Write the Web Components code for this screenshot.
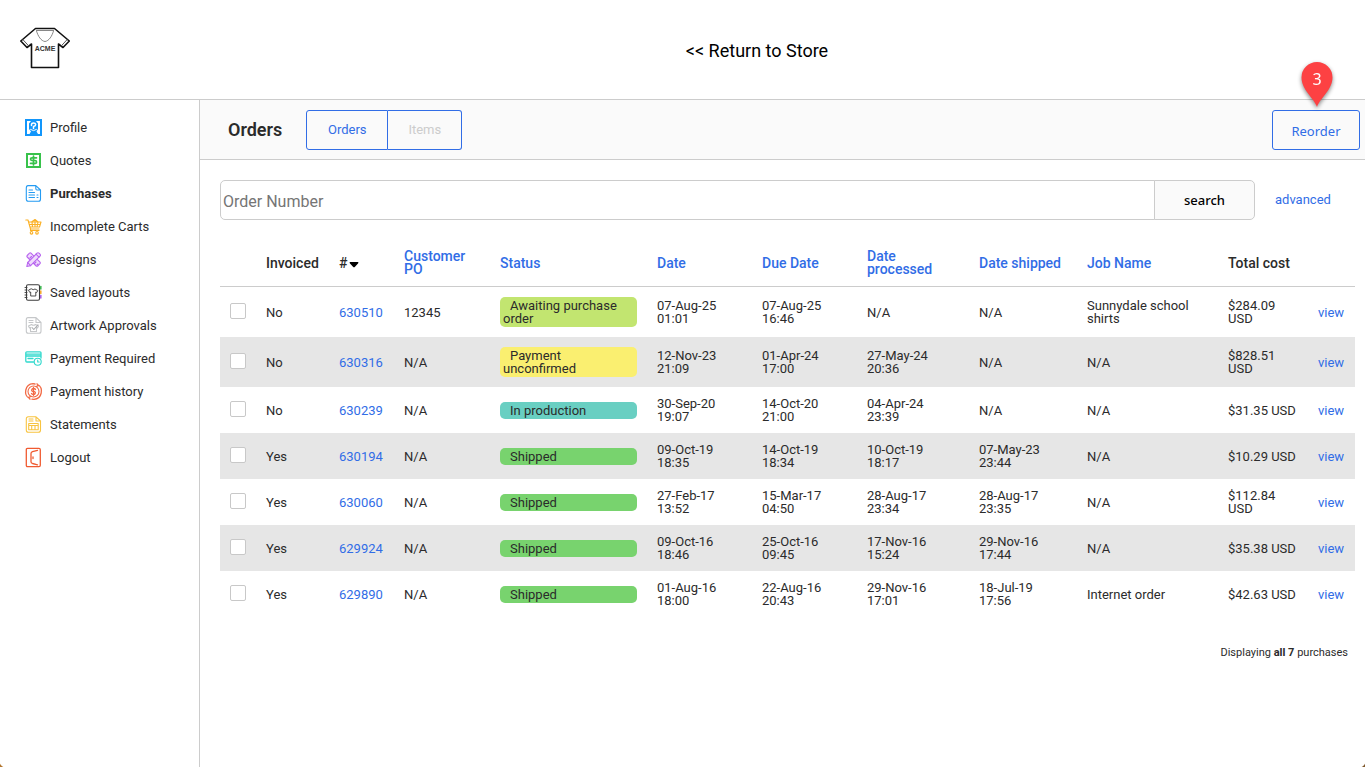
<!DOCTYPE html>
<html lang="en">
<head>
<meta charset="utf-8">
<meta name="viewport" content="width=device-width, initial-scale=1">
<title>Orders</title>
<style>
:root{--link:#316de6;--ink:#2b2b2b;--line:#ccc;--panel:#fafafa;--ui:"Noto Sans",sans-serif}
html,body{margin:0;min-height:100%}
body{font:13px/17px Roboto,sans-serif;color:var(--ink);background:#fff}
</style>
</head>
<body>
<store-account></store-account>

<script>
const define = (name, html, setup) => {
  const tpl = document.createElement('template');
  tpl.innerHTML = html;
  customElements.define(name, class extends HTMLElement {
    constructor() {
      super();
      this.attachShadow({ mode: 'open' }).append(tpl.content.cloneNode(true));
    }
    connectedCallback() { if (setup) setup(this, this.shadowRoot); }
  });
};

/* Site header: logo and link back to the shop */
define('store-header', `
<style>
:host{display:flex;align-items:center;height:99px;border-bottom:1px solid var(--line)}
.logo{flex:0 0 129px;padding:0 0 4px 20px;display:flex}
.back{flex:1;padding-top:2px;text-align:center;font-size:18px;line-height:24px}
a{color:#000;text-decoration:none}
svg{display:block}
</style>
<a class="logo" href="#home" aria-label="Acme">
<svg width="50" height="44" viewBox="0 0 50 44" fill="none" stroke="#111" stroke-width="1.6" stroke-linejoin="round">
<path d="M15.500 2.500H34.500L49.300 15 43 21.500 38.500 18V41.500H11.500V18L7 21.500.8 15Z"/>
<path d="M2.800 13.500l6 6.500M47.200 13.500l-6 6.500" stroke-width="1" stroke="#555"/>
<path d="M16 4.500H34" stroke-width="1" stroke="#888"/>
<path d="M16.500 5C18 10 21 15 25 15.500 29 15 32 10 33.500 5" stroke-width="1" stroke="#888"/>
<text x="25" y="25" text-anchor="middle" font-family="Liberation Sans,sans-serif" font-weight="700" font-size="7" fill="#333" stroke="none">ACME</text>
</svg></a>
<div class="back"><a href="#store">&lt;&lt; Return to Store</a></div>`);

/* One sidebar entry; the icon is slotted in */
define('nav-item', `
<style>
:host{display:block}
a{display:flex;align-items:center;gap:8px;height:33px;color:inherit;text-decoration:none}
:host([current]) a{font-weight:700}
::slotted(svg){display:block;width:17px;height:17px;overflow:visible}
</style>
<a href="#"><slot name="icon"></slot><span><slot></slot></span></a>`,
(el, root) => { if (el.hasAttribute('current')) root.querySelector('a').setAttribute('aria-current', 'page'); });

define('side-nav', `
<style>
:host{display:block;box-sizing:border-box;flex:0 0 200px;padding:11px 0 0 25px;border-right:1px solid var(--line)}
svg{fill:none;stroke-width:1.1;stroke-linejoin:round;stroke-linecap:round}
</style>
<nav>
<nav-item><svg slot="icon" viewBox="0 0 17 17" stroke="#1296fb"><path d="M0 0H17V17H0ZM2 2V15H4.500L6 12.500 4 10V4.500L6 2ZM11 2L13 4.500V10L11.500 12.500 13 15H15V2Z" fill="#1296fb" fill-rule="evenodd" stroke="none"/><path d="M6.500 6.500V5.200Q6.500 4 8.500 4T10.700 5.500Q10.700 7 8.500 7.500V9.500" stroke="#fff" stroke-width="1.500"/><path d="M5.500 10.500Q8.500 13 11.500 10.500" stroke="#fff" stroke-width="1"/></svg>Profile</nav-item>
<nav-item><svg slot="icon" viewBox="0 0 17 17" stroke="#38c24b"><path d="M2 2H15V15H2Z" stroke-width="2" stroke-linejoin="miter"/><path d="M11.500 5.800H7Q5.500 5.800 5.500 7T7 8.500H10Q11.500 8.500 11.500 10T10 11.300H5.500M8.500 4V13" stroke-width="1.700"/></svg>Quotes</nav-item>
<nav-item current><svg slot="icon" viewBox="0 0 17 17" stroke="#249bf2"><path d="M3 .6H10.800L15.500 5V14Q15.500 16.300 13.500 16.300H3.500Q1.300 16.300 1.300 14V3Q1.300.6 3 .6ZM10.800.8V3.500Q10.800 5 12 5H15.300M4 5H7.500M4 7.500H9.500M4 10H9.500M12 10H13M4 12.500H9.500M12 12.500H13"/></svg>Purchases</nav-item>
<nav-item><svg slot="icon" viewBox="0 0 17 17" stroke="#fbb024"><path d="M.8 2H3L5.500 11H14M3.600 4H16L14.500 9H5M4.500 6.500H15M7 4L7.500 9M10 1.500V9M13 4L12 9M6.500 4L10 1.500 13 4M5.500 11V12.500H14"/><circle cx="6.500" cy="14.800" r="1.300"/><circle cx="12" cy="14.800" r="1.300"/></svg>Incomplete Carts</nav-item>
<nav-item><svg slot="icon" viewBox="0 0 17 17" stroke="#b866ef"><g fill="#f0dcfc"><path d="M2.200 4.500L4.500 2.200Q5.300 1.500 6 2.200L15 11.200Q15.600 12 15 12.700L12.700 15Q12 15.600 11.200 15L2.200 6Q1.500 5.300 2.200 4.500Z"/><path d="M1.800 15.500L2.700 11.500 12 2.200Q13 1.300 14 2.200L15 3.200Q16 4.300 15 5.200L5.600 14.600Z"/></g><path d="M2.700 11.500L5.600 14.600M11 3.200L14 6.200M5 7L6.500 5.500M9.500 12.500L11 11M12 14L13 13"/></svg>Designs</nav-item>
<nav-item><svg slot="icon" viewBox="0 0 17 17" stroke="#3c3c3c"><rect x="1.500" y=".8" width="13" height="15.500" rx="1.500"/><path d="M0 3.500H2M0 6H2M0 8.500H2M0 11H2M0 13.500H2M6.500 5Q8.300 6.500 10 5L12.800 6.500 11.700 8.500 10.800 8V12H5.700V8L4.800 8.500 3.700 6.500Z" stroke-width=".9"/><path d="M15.800 2.500V5" stroke="#36b34a" stroke-width="1.500"/><path d="M15.800 7V9.500" stroke="#f5a623" stroke-width="1.500"/><path d="M15.800 11.500V14" stroke="#a55be5" stroke-width="1.500"/></svg>Saved layouts</nav-item>
<nav-item><svg slot="icon" viewBox="0 0 17 17" stroke="#c5c7c9"><path d="M3 .6H11L16 5.500V14.300Q16 16.300 14 16.300H3.300Q1.300 16.300 1.300 14.300V2.600Q1.300.6 3 .6ZM11 .8V5.500H15.800M4 3.500H8M4 5.500H8M6.500 7.500Q8.500 9 10.500 7.500L13.500 9 12.500 11 11.500 10.500V14.500H5.500V10.500L4.500 11 3.500 9Z"/><path d="M7 10.500L8.800 12.500 13 7.800" stroke="#a9acae"/></svg>Artwork Approvals</nav-item>
<nav-item><svg slot="icon" viewBox="0 0 17 17" stroke="#30d9cd"><path d="M8.500 12H1.800Q.8 12 .8 11V2.800Q.8 1.800 1.800 1.800H15Q16 1.800 16 2.800V8M1 4.200H16M1 6H16M3 8.500H8" stroke-width="1.300"/><circle cx="12.700" cy="11.800" r="3.500"/><path d="M12.700 10V12H14.200"/></svg>Payment Required</nav-item>
<nav-item><svg slot="icon" viewBox="0 0 17 17" stroke="#f26a45"><circle cx="8.500" cy="8.500" r="5.500"/><path d="M10 1L8 .6Q2 1 .8 7T4.500 15.500M7 16.200L9 16.400Q15 16 16.200 10T12.500 1.500M12 .8L13 2.800 11 3.500M5 16.200L4 14.200 6 13.500M10.500 6.500Q10 5.500 8.500 5.500T6.700 7 8.500 8.500 10.300 10 8.500 11.500Q7 11.500 6.500 10.500M8.500 4.500V12.500" stroke-width="1.300"/></svg>Payment history</nav-item>
<nav-item><svg slot="icon" viewBox="0 0 17 17" stroke="#f8c440"><path d="M3.300.8H11L15.500 5V14Q15.500 16.300 13.300 16.300H3.500Q1.300 16.300 1.300 14V3Q1.300.8 3.300.8ZM11 1V5H15.300M4 3H8M4 5H8M3.700 7.500H13.200V13.800H3.700ZM3.700 9.500H13.200M6.700 9.500V13.500M10 9.500V13.500"/></svg>Statements</nav-item>
<nav-item><svg slot="icon" viewBox="0 0 17 17" stroke="#f05a30"><path d="M2.500-.6H14Q15.300-.6 15.300.7V16.300Q15.300 17.600 14 17.600H2.500Q1.300 17.600 1.300 16.300V.7Q1.300-.6 2.500-.6ZM12.500 1.300L7.500 2.700Q6 3.200 6 4.500V12.700Q6 14 7.500 14.500L12.500 15.900M8 8V9.500" stroke-width="1.300"/></svg>Logout</nav-item>
</nav>`);

/* Numbered callout that hangs over the button below it */
define('step-pin', `
<style>
:host{position:absolute;left:50%;bottom:100%;width:40px;height:52px;margin-left:-20px;pointer-events:none}
svg{display:block;overflow:visible;filter:drop-shadow(0 2px 2px #0007)}
</style>
<svg width="40" height="52" viewBox="0 0 40 52"><path d="M21 49C18 40 5.500 32 5.500 19.500A15.500 15.500 0 0 1 36.500 19.500C36.500 32 24 40 21 49Z" fill="#fd4143"/><text x="21" y="27" text-anchor="middle" font-family="Noto Sans,sans-serif" font-size="16" fill="#fff"></text></svg>`,
(el, root) => { root.querySelector('text').textContent = el.getAttribute('number'); });

define('orders-toolbar', `
<style>
:host{display:flex;align-items:center;height:59px;padding:0 5px 0 28px;background:var(--panel);border-bottom:1px solid var(--line)}
h1{margin:0 24px 0 0;font-size:18px;line-height:24px;font-weight:600}
button{box-sizing:border-box;height:40px;padding:0;border:1px solid var(--link);background:none;color:var(--link);font:inherit}
.tabs{display:flex}
.tabs button:first-child{width:82px;border-radius:3px 0 0 3px}
.tabs button:last-child{width:74px;border-radius:0 3px 3px 0;border-left:0}
.tabs button:disabled{color:#ccc}
.action{position:relative;margin-left:auto}
.action button{width:88px;padding-top:3px;font-family:var(--ui);border-radius:3px}
</style>
<h1>Orders</h1>
<div class="tabs"><button type="button">Orders</button><button type="button" disabled>Items</button></div>
<div class="action"><button type="button">Reorder</button><step-pin number="3"></step-pin></div>`);

define('order-search', `
<style>
:host{display:block}
form{display:flex;align-items:center}
input,button{box-sizing:border-box;height:40px;margin:0;border:1px solid var(--line)}
input{flex:1;min-width:0;padding:4px 2px 2px;border-radius:5px 0 0 5px;font-family:inherit;font-size:16px;background:#fff}
input::placeholder{color:#757575}
button{width:101px;margin-left:-1px;border-radius:0 5px 5px 0;background:var(--panel);color:#000;font-family:var(--ui);font-size:13px;font-weight:500}
a{box-sizing:border-box;width:100px;padding:0 0 2px 20px;color:var(--link);text-decoration:none}
</style>
<form role="search"><input type="text" aria-label="Order Number" placeholder="Order Number"><button type="button">search</button><a href="#advanced">advanced</a></form>`);

define('status-pill', `
<style>
:host{display:block;padding:2px 3px;border-radius:5px;text-indent:7px;background:#78d36e}
:host([tone=lime]){background:#c2e570}
:host([tone=yellow]){background:#faef70}
:host([tone=teal]){background:#69cfc2}
</style><slot></slot>`);

const ORDERS = [
  ['No', '630510', '12345', 'Awaiting purchase order', '07-Aug-25 01:01', '07-Aug-25 16:46', 'N/A', 'N/A', 'Sunnydale school shirts', '$284.09 USD'],
  ['No', '630316', 'N/A', 'Payment unconfirmed', '12-Nov-23 21:09', '01-Apr-24 17:00', '27-May-24 20:36', 'N/A', 'N/A', '$828.51 USD'],
  ['No', '630239', 'N/A', 'In production', '30-Sep-20 19:07', '14-Oct-20 21:00', '04-Apr-24 23:39', 'N/A', 'N/A', '$31.35 USD'],
  ['Yes', '630194', 'N/A', 'Shipped', '09-Oct-19 18:35', '14-Oct-19 18:34', '10-Oct-19 18:17', '07-May-23 23:44', 'N/A', '$10.29 USD'],
  ['Yes', '630060', 'N/A', 'Shipped', '27-Feb-17 13:52', '15-Mar-17 04:50', '28-Aug-17 23:34', '28-Aug-17 23:35', 'N/A', '$112.84 USD'],
  ['Yes', '629924', 'N/A', 'Shipped', '09-Oct-16 18:46', '25-Oct-16 09:45', '17-Nov-16 15:24', '29-Nov-16 17:44', 'N/A', '$35.38 USD'],
  ['Yes', '629890', 'N/A', 'Shipped', '01-Aug-16 18:00', '22-Aug-16 20:43', '29-Nov-16 17:01', '18-Jul-19 17:56', 'Internet order', '$42.63 USD'],
];
const TONES = { 'Awaiting purchase order': 'lime', 'Payment unconfirmed': 'yellow', 'In production': 'teal', 'Shipped': 'green' };
const COLUMNS = [36, 73, 65, 96, 157, 105, 105, 112, 108, 141, 90, 47];

define('orders-table', `
<style>
:host{display:block;line-height:13px}
table{width:100%;table-layout:fixed;border-collapse:separate;border-spacing:0}
th,td{padding:10px;text-align:left;vertical-align:middle}
th:nth-child(8),td:nth-child(8){padding-right:20px}
th:nth-child(11),td:nth-child(11){padding-right:8px}
th{border-bottom:1px solid var(--line);font-size:14px;font-weight:500;height:26px}
th:nth-child(9){white-space:nowrap}
td{height:26px}
tr:nth-child(even) td{background:#e6e6e6}
a{color:var(--link);text-decoration:none}
th svg{margin-left:2px}
input{appearance:none;display:block;box-sizing:border-box;width:16px;height:16px;margin:0 0 2px;border:1px solid #c8c8c8;border-radius:2px;background:#fff}
</style>
<table>
<colgroup></colgroup>
<thead><tr><th aria-label="Select"></th><th>Invoiced</th><th>#<svg width="10" height="7" viewBox="0 0 10 7"><path d="M1 1H9Q10 1.500 9 2.500L6 5.700Q5 6.700 4 5.700L1 2.500Q0 1.500 1 1Z"/></svg></th><th><a href="#">Customer PO</a></th><th><a href="#">Status</a></th><th><a href="#">Date</a></th><th><a href="#">Due Date</a></th><th><a href="#">Date processed</a></th><th><a href="#">Date shipped</a></th><th><a href="#">Job Name</a></th><th>Total cost</th><th aria-label="Open"></th></tr></thead>
<tbody></tbody>
</table>`,
(el, root) => {
  root.querySelector('colgroup').innerHTML = COLUMNS.map(w => `<col style="width:${w}px">`).join('');
  root.querySelector('tbody').innerHTML = ORDERS.map(([inv, id, po, status, ...rest]) => `<tr>
<td><input type="checkbox" aria-label="Select order ${id}"></td><td>${inv}</td><td><a href="#${id}">${id}</a></td><td>${po}</td>
<td><status-pill tone="${TONES[status]}">${status}</status-pill></td>${rest.map(v => `<td>${v}</td>`).join('')}<td><a href="#${id}">view</a></td></tr>`).join('');
});

define('store-account', `
<style>
:host{display:flex;flex-direction:column;min-height:100vh;position:relative}
.body{flex:1;display:flex}
main{flex:1;min-width:0}
.content{display:flex;flex-direction:column;gap:20px;padding:20px 10px 20px 20px}
.count{margin:8px 7px 0 0;text-align:right;font-size:11px;line-height:16px}
.corner{position:absolute;bottom:0;width:6px;height:6px}
.left{left:0;background:radial-gradient(circle at 100% 0,#0000 6px,#b3762f 7px)}
.right{right:0;background:radial-gradient(circle at 0 0,#0000 6px,#80592c 7px)}
</style>
<store-header></store-header>
<div class="body">
<side-nav></side-nav>
<main>
<orders-toolbar></orders-toolbar>
<div class="content"><order-search></order-search><orders-table></orders-table><p class="count">Displaying <b>all 7</b> purchases</p></div>
</main>
</div>
<div class="corner left"></div><div class="corner right"></div>`);
</script>
</body>
</html>
